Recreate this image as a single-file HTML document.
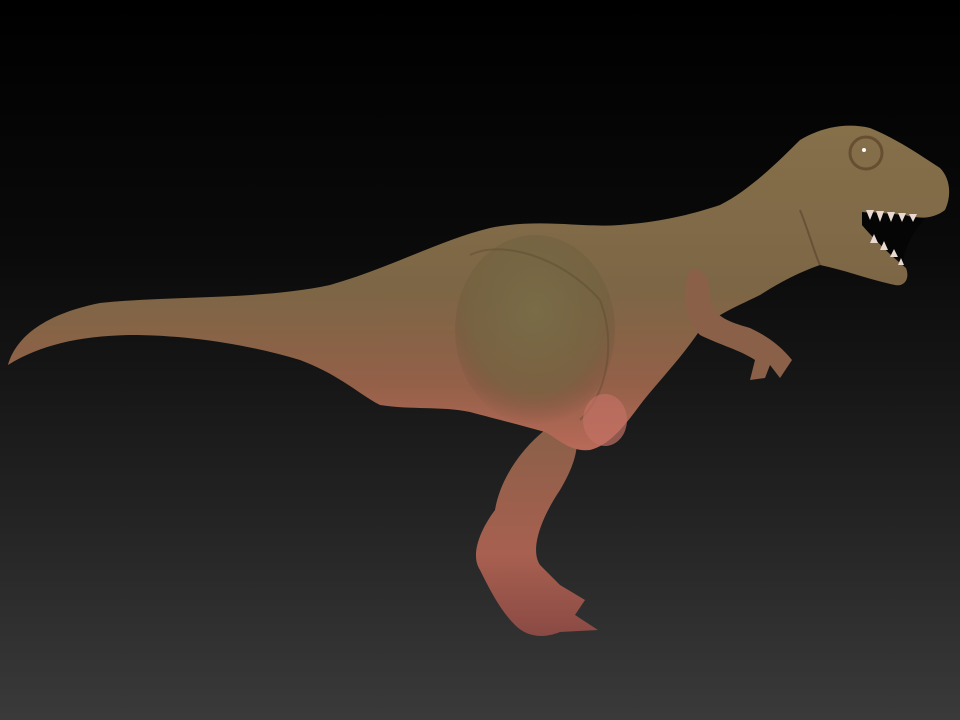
<!DOCTYPE html>
<html><head><style>
html,body{margin:0;padding:0;width:960px;height:720px;overflow:hidden;background:#000}
</style></head><body>
<svg width="960" height="720" viewBox="0 0 960 720" xmlns="http://www.w3.org/2000/svg">
<defs>
<linearGradient id="bg" x1="0" y1="0" x2="0" y2="1">
<stop offset="0" stop-color="#000"/><stop offset="0.35" stop-color="#0a0a0a"/><stop offset="0.7" stop-color="#222"/><stop offset="1" stop-color="#3a3a3a"/>
</linearGradient>
<linearGradient id="skin" x1="0" y1="0" x2="0" y2="1">
<stop offset="0" stop-color="#86704a"/><stop offset="0.5" stop-color="#7c6645"/><stop offset="0.8" stop-color="#946048"/><stop offset="1" stop-color="#b86a58"/>
</linearGradient>
<linearGradient id="leg" x1="0" y1="0" x2="0" y2="1">
<stop offset="0" stop-color="#8a6048"/><stop offset="0.6" stop-color="#a86050"/><stop offset="1" stop-color="#8a4a44"/>
</linearGradient>
<radialGradient id="thigh" cx="0.5" cy="0.4" r="0.6">
<stop offset="0" stop-color="#7a6c48"/><stop offset="0.7" stop-color="#72623f" stop-opacity="0.7"/><stop offset="1" stop-color="#6a4a38" stop-opacity="0"/>
</radialGradient>
</defs>
<rect width="960" height="720" fill="url(#bg)"/>
<path d="M545,430 C520,450 500,480 495,510 C480,530 470,555 480,570 C490,590 500,610 515,625 C525,635 540,640 560,632 L598,630 L575,615 L585,600 L560,585 L540,565 C530,550 540,520 560,490 C575,465 580,445 575,430 Z" fill="url(#leg)"/>
<path d="M8,365 C15,340 40,315 100,303 C180,295 260,300 330,285 C390,268 440,240 490,228 C540,218 580,228 620,225 C660,222 690,215 720,205 C750,190 780,160 800,140 C820,128 845,122 870,128 C895,138 920,155 940,168 C950,178 952,195 945,210 C935,218 920,220 905,215 L870,212 L862,225 C875,240 890,255 906,268 C910,278 905,287 895,285 C870,280 845,270 820,265 C800,272 780,282 760,295 C740,305 715,315 700,330 C680,360 655,385 640,405 C625,425 610,445 590,450 C570,452 560,440 545,432 C520,425 500,420 470,412 C440,406 410,410 380,405 C360,395 340,375 300,360 C250,345 190,335 130,335 C80,336 40,345 8,365 Z" fill="url(#skin)"/>
<ellipse cx="535" cy="330" rx="80" ry="95" fill="url(#thigh)"/>
<path d="M470,255 C500,240 560,255 600,300 C615,340 610,390 580,420" fill="none" stroke="#5a4630" stroke-width="2" opacity="0.4"/>
<ellipse cx="605" cy="420" rx="22" ry="26" fill="#c27064" opacity="0.7"/>
<path d="M690,270 C680,290 685,320 700,335 C720,345 740,350 755,360 L750,380 L765,378 L770,365 L780,378 L792,360 C780,345 765,335 750,328 C730,322 715,318 710,300 C712,285 705,265 690,270 Z" fill="#8a6048"/>
<path d="M862,212 L925,218 C915,230 905,245 903,262 C890,255 875,240 862,225 Z" fill="#050505"/>
<g fill="#e8d8d0">
<path d="M866,210 l4,10 l4,-10z M876,211 l4,11 l4,-11z M887,212 l4,10 l4,-10z M898,213 l4,9 l4,-9z M909,214 l4,8 l4,-8z"/>
<path d="M870,243 l4,-9 l4,9z M880,250 l4,-9 l4,9z M890,257 l4,-8 l4,8z M898,265 l3,-7 l3,7z"/>
</g>
<circle cx="866" cy="153" r="16" fill="none" stroke="#5a4028" stroke-width="3" opacity="0.7"/>
<circle cx="864" cy="150" r="2" fill="#fff"/>
<path d="M800,210 C810,235 815,255 820,265" fill="none" stroke="#5a4030" stroke-width="2" opacity="0.6"/>
</svg>
</body></html>
